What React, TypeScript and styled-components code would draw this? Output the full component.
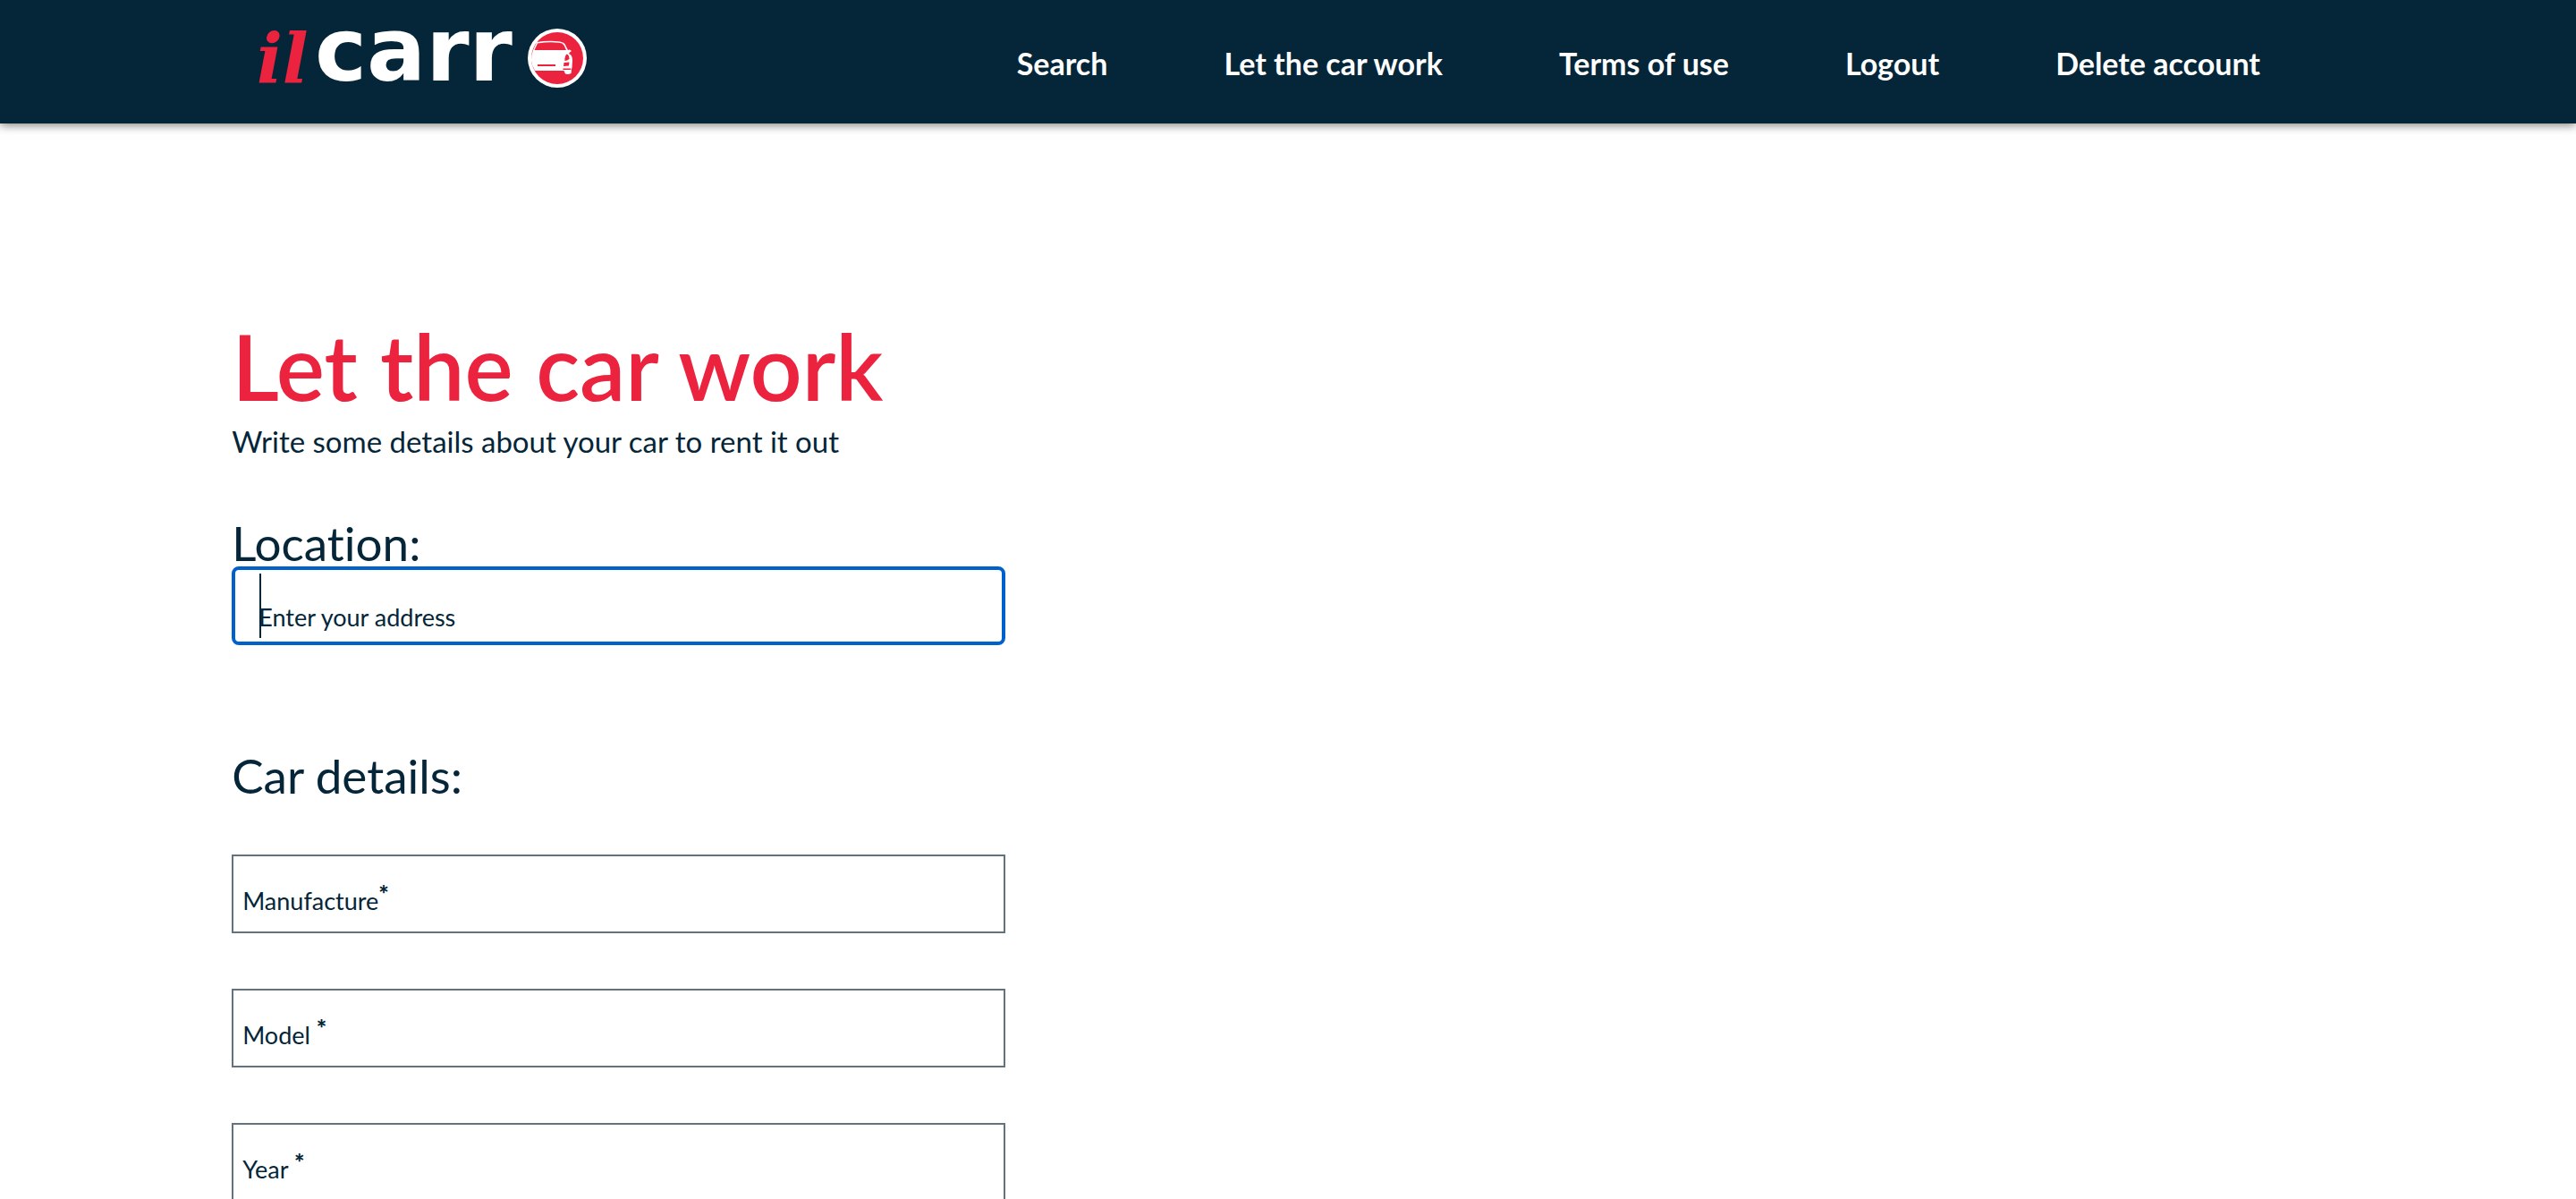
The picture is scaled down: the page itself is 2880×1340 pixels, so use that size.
import React from 'react';
import styled, { createGlobalStyle } from 'styled-components';

const navy = '#042638';
const red = '#ec233f';

const GlobalStyle = createGlobalStyle`
  *, *::before, *::after { box-sizing: border-box; }
  body {
    margin: 0;
    background: #fff;
    color: ${navy};
    font-family: Lato, 'Open Sans', sans-serif;
    font-variant-ligatures: no-common-ligatures;
  }
`;

const Page = styled.div`
  height: 100vh;
  overflow: hidden;
`;

const Header = styled.header`
  display: flex;
  align-items: center;
  justify-content: space-between;
  min-height: 138px;
  padding: 0 10%;
  background: ${navy};
  box-shadow: 0 2px 10px rgba(0, 0, 0, 0.5);
`;

const LogoLink = styled.a`
  display: block;
  padding-bottom: 6px;
`;

const LogoDrawing = styled.svg`
  display: block;
  width: 370px;
  height: 68px;
  overflow: visible;
`;

const NavList = styled.ul`
  display: flex;
  margin: 0;
  padding: 4px 0 0;
  list-style: none;
`;

const NavItem = styled.li`
  padding: 0 65px;
`;

const NavLink = styled.a`
  color: #fff;
  font-size: 34px;
  font-weight: 700;
  line-height: 44px;
  white-space: nowrap;
  text-decoration: none;
`;

const Main = styled.main`
  padding: 217px 9% 0;
`;

const Title = styled.h1`
  margin: 0;
  color: ${red};
  font-size: 102px;
  font-weight: 600;
  line-height: 108px;
`;

const Lead = styled.p`
  margin: 6px 0 0;
  font-size: 33px;
  line-height: 48px;
`;

const Form = styled.form`
  width: 36.6%;
`;

const Section = styled.fieldset<{ $space: number }>`
  margin: ${(p) => p.$space}px 0 0;
  padding: 0;
  border: 0;
  min-width: 0;
`;

const Legend = styled.legend`
  padding: 0;
  font-size: 53px;
  line-height: 52px;
`;

const FieldList = styled.div`
  display: grid;
  gap: 62px;
  padding-top: 62px;
`;

const Field = styled.div`
  display: grid;
  align-items: center;
  > * { grid-area: 1 / 1; }
`;

const Input = styled.input<{ $active?: boolean }>`
  width: 100%;
  height: 88px;
  padding: 0 28px;
  border: ${(p) => (p.$active ? '4px solid #0061cc' : '2px solid #62737f')};
  border-radius: ${(p) => (p.$active ? 8 : 0)}px;
  outline: none;
  background: #fff;
  color: ${navy};
  caret-color: transparent;
  font: 27px/72px Lato, 'Open Sans', sans-serif;
`;

const Label = styled.label<{ $active?: boolean }>`
  display: flex;
  padding: ${(p) => (p.$active ? '26px 0 0 30px' : '16px 0 0 12px')};
  font-size: 27px;
  line-height: 36px;
  pointer-events: none;
  white-space: pre;
`;

const Required = styled.span`
  font-size: 27px;
  font-weight: 900;
  line-height: 20px;
`;

const Caret = styled.span`
  width: 2px;
  height: 72px;
  margin-left: 31px;
  background: ${navy};
  pointer-events: none;
`;

const links = ['Search', 'Let the car work', 'Terms of use', 'Logout', 'Delete account'];

const carFields = [
  { id: 'manufacture', text: 'Manufacture' },
  { id: 'model', text: 'Model ' },
  { id: 'year', text: 'Year ' },
];

function Logo() {
  return (
    <LogoDrawing viewBox="0 0 370 68" role="img" aria-label="ilcarro">
      <text x="-1" y="60" fill={red} fontFamily="DejaVu Serif, serif" fontSize="76" fontWeight="700" fontStyle="italic">il</text>
      <text x="64" y="58" fill="#fff" fontFamily="DejaVu Sans, sans-serif" fontSize="98" fontWeight="700">carr</text>
      <circle cx="335" cy="33" r="33" fill="#fff" />
      <circle cx="335" cy="33" r="29" fill={red} />
      <path
        d="M308 24 L312 15 Q326 13 338 14.500 Q342 15 343.500 17 L347 24 Q349 22.500 351 25 Q348 27 348 28 Q352 29 352 36 L351.500 44 Q350 45.500 351 47 L350.500 50 Q347 51.500 344 50.500 L342.500 47 L310 47 Q303 36 308 24 Z"
        fill="#fff"
      />
      <path d="M309.500 24 L313 16.500 Q326 14.500 337 15.800 Q341 16 342.500 18.500 L345 24 Z" fill={red} />
      <path d="M343.500 36 Q343 31 345.500 28.500 Q348.500 29 348.500 34 Q346 36 343.500 36 Z" fill={red} />
      <path d="M342.500 38 L348.500 37.500 L348 41.500 L342 42 Z M341.500 44.500 H350 V46 H341.500 Z M313 40 H333 V42 H313 Z" fill={red} />
    </LogoDrawing>
  );
}

export default function App() {
  return (
    <Page>
      <GlobalStyle />
      <Header>
        <LogoLink href="#home">
          <Logo />
        </LogoLink>
        <nav>
          <NavList>
            {links.map((text) => (
              <NavItem key={text}>
                <NavLink href={`#${text.toLowerCase().replace(/ /g, '-')}`}>{text}</NavLink>
              </NavItem>
            ))}
          </NavList>
        </nav>
      </Header>
      <Main>
        <Title>Let the car work</Title>
        <Lead>Write some details about your car to rent it out</Lead>
        <Form>
          <Section $space={64}>
            <Legend>Location:</Legend>
            <Field>
              <Input id="address" type="text" $active />
              <Label htmlFor="address" $active>Enter your address</Label>
              <Caret aria-hidden="true" />
            </Field>
          </Section>
          <Section $space={120}>
            <Legend>Car details:</Legend>
            <FieldList>
              {carFields.map((field) => (
                <Field key={field.id}>
                  <Input id={field.id} type="text" required />
                  <Label htmlFor={field.id}>
                    {field.text}
                    <Required>*</Required>
                  </Label>
                </Field>
              ))}
            </FieldList>
          </Section>
        </Form>
      </Main>
    </Page>
  );
}
